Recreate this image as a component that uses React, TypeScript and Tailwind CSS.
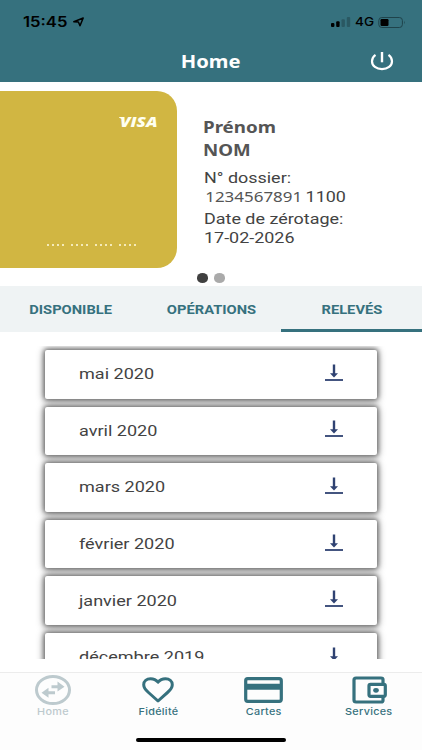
import type { ReactNode } from "react";

const months = [
  "mai 2020",
  "avril 2020",
  "mars 2020",
  "février 2020",
  "janvier 2020",
  "décembre 2019",
];

function StatusBar() {
  return (
    <div className="flex h-[42px] items-center pt-[2px] pl-[23px] pr-4 text-black">
      <span className="w-[50px] origin-left scale-x-[1.19] whitespace-nowrap font-['Inter',sans-serif] text-[14px] font-semibold leading-none">
        15:45
      </span>
      <svg className="-mt-px h-[10px] w-[12px]" viewBox="0 0 12 10" fill="none" stroke="currentColor" strokeWidth="1.5" strokeLinejoin="round">
        <path d="M.8 4.7 10.200 1 7 8.800 5.400 5Z" />
      </svg>
      <svg className="ml-auto h-[10px] w-[20px]" viewBox="0 0 20 10" fill="currentColor">
        <rect x="0" y="6" width="3.4" height="4" rx="1" />
        <rect x="5.2" y="4.2" width="3.4" height="5.8" rx="1" />
        <rect x="10.5" y="2.2" width="3.4" height="7.8" rx="1" opacity="0.22" />
        <rect x="15.8" y="0" width="3.4" height="10" rx="1" opacity="0.22" />
      </svg>
      <span className="ml-[4px] w-[23px] origin-left scale-x-[1.13] font-['Inter',sans-serif] text-[12px] font-medium leading-none">
        4G
      </span>
      <svg className="h-[11px] w-[28px]" viewBox="0 0 28 11">
        <rect x="0.8" y="0.5" width="23.6" height="10" rx="3" fill="none" stroke="#1f434b" />
        <rect x="2.5" y="2" width="8" height="7" rx="1.2" fill="#000" />
        <path d="M26 3.8q1.4 1.7 0 3.4Z" fill="#1f434b" />
      </svg>
    </div>
  );
}

function Header() {
  return (
    <header className="h-[81.5px] bg-[#36717e]">
      <StatusBar />
      <div className="relative flex h-[37px] items-center justify-center text-white">
        <h1 className="scale-x-[1.12] font-['Noto_Sans',sans-serif] text-[18px] font-bold leading-none">Home</h1>
        <svg className="absolute left-[370px] top-[9px] h-[20px] w-[24px]" viewBox="0 0 24 20" fill="none" stroke="currentColor" strokeWidth="2.2">
          <path d="M12 1v10.300" strokeWidth="2.400" />
          <path d="M5.500 3.800C3.300 5.300 2 7.600 2 10.200c0 4.700 4.400 8 10 8s10-3.300 10-8c0-2.600-1.300-4.900-3.500-6.400" />
        </svg>
      </div>
    </header>
  );
}

function CardInfo() {
  return (
    <section className="flex h-[204.5px] flex-col bg-white">
      <div className="flex pt-[9.5px]">
        <div className="flex h-[177px] w-[177px] flex-col items-end justify-between rounded-r-[20px] bg-[#d1b642] pt-[25px] pr-5 pb-[22px] text-[#fffff0]">
          <div className="flex h-[12px] items-center">
            <svg className="mr-[-4px] h-[11px] w-[5px]" viewBox="0 0 5 11" fill="currentColor">
              <path d="M0 0h3.5l1.5 5Q3 1.5 0 .6Z" />
            </svg>
            <span className="w-[37px] origin-left scale-x-[1.18] font-['Open_Sans',sans-serif] text-[14.5px] font-extrabold italic leading-none">
              VISA
            </span>
          </div>
          <div className="mr-[21px] flex gap-[7px]">
            {[0, 1, 2, 3].map((group) => (
              <div key={group} className="flex gap-[3px]">
                {[0, 1, 2, 3].map((dot) => (
                  <i key={dot} className="h-[2px] w-[2px] rounded-full bg-[#fffbe0]" />
                ))}
              </div>
            ))}
          </div>
        </div>

        <div className="ml-[26px] pt-[25px] font-['Roboto',sans-serif] text-[15px] text-[#434343]">
          <div className="origin-left scale-x-[1.17] font-['Noto_Sans',sans-serif] text-[16px] font-bold leading-[22.5px] text-[#555]">
            <p>Prénom</p>
            <p>NOM</p>
          </div>
          <div className="mt-[7px] ml-[0.5px] w-[130px] origin-left scale-x-[1.195] leading-5">
            <p>N° dossier:</p>
            <p className="-mt-px flex">
              <span className="ml-[1px] w-[84px] font-['Noto_Sans',sans-serif] text-[14.2px] text-[#555]">1234567891</span>
              <span>1100</span>
            </p>
            <p className="mt-[2px]">Date de zérotage:</p>
            <p className="-mt-px">17-02-2026</p>
          </div>
        </div>
      </div>
      <div className="mt-[5px] flex justify-center gap-[5.5px]">
        <i className="h-[9.5px] w-[11.5px] rounded-[50%] bg-[#404040]" />
        <i className="h-[9.5px] w-[11.5px] rounded-[50%] bg-[#aaa]" />
      </div>
    </section>
  );
}

function Tab({ label, active }: { label: string; active?: boolean }) {
  return (
    <div className={`flex items-center justify-center border-b-[3px] pt-[3px] ${active ? "border-[#36717e]" : "border-transparent"}`}>
      <span className="scale-x-[1.13] font-['Roboto',sans-serif] text-[13px] font-bold leading-none text-[#36717e]">
        {label}
      </span>
    </div>
  );
}

function Statement({ month }: { month: string }) {
  return (
    <div className="flex h-[48.6px] shrink-0 items-center justify-between rounded-[2px] bg-white px-[34px] shadow-[0_0_5px_1px_#666,0_1px_10px_0_#888]">
      <span className="origin-left scale-x-[1.165] pt-[1px] font-['Roboto',sans-serif] text-[15.5px] leading-normal text-[#434343]">
        {month}
      </span>
      <svg className="mb-[3px] h-[18px] w-[18px] text-[#2f4272]" viewBox="0 0 18 18" fill="none" stroke="currentColor">
        <path d="M9 .5V11" strokeWidth="2.4" />
        <path d="M5 9.300h8L9 13.500Z" fill="currentColor" stroke="none" />
        <path d="M0 16h18" strokeWidth="1.800" />
      </svg>
    </div>
  );
}

function NavItem({ label, muted, children }: { label: string; muted?: boolean; children: ReactNode }) {
  return (
    <div className={`flex flex-1 flex-col items-center ${muted ? "text-[#bdcace]" : "text-[#36717e]"}`}>
      <div className="flex h-[33px] items-center justify-center pt-[1px]">{children}</div>
      <span className="scale-x-[1.14] font-['Inter',sans-serif] text-[9.5px] font-medium leading-[12px] tracking-[0.25px]">
        {label}
      </span>
    </div>
  );
}

export default function App() {
  return (
    <div className="flex h-[750px] w-[422px] flex-col overflow-hidden bg-white">
      <Header />
      <CardInfo />

      <nav className="grid h-[46px] grid-cols-3 bg-[#eff3f4]">
        <Tab label="DISPONIBLE" />
        <Tab label="OPÉRATIONS" />
        <Tab label="RELEVÉS" active />
      </nav>

      <main className="mt-[14px] flex h-[313px] flex-col gap-[8px] overflow-hidden px-[45px] pt-[4px]">
        {months.map((month) => (
          <Statement key={month} month={month} />
        ))}
      </main>

      <footer className="mt-[13px] flex flex-1 flex-col border-t border-[#ececec] bg-[#fdfdfd]">
        <div className="flex">
          <NavItem label="Home" muted>
            <svg className="h-[30px] w-[36px]" viewBox="0 0 36 30" fill="none" stroke="currentColor">
              <ellipse cx="18" cy="15" rx="16.5" ry="13.5" strokeWidth="3" />
              <path d="M16.500 11.700h7M12 17.800h8" strokeWidth="3" />
              <path d="M22.500 6.500 29.500 11.700 22.500 16.500ZM13.500 12.700 6.500 17.800 13.500 22.700Z" fill="currentColor" stroke="none" />
            </svg>
          </NavItem>
          <NavItem label="Fidélité">
            <svg className="h-[26px] w-[32px]" viewBox="0 0 32 26" fill="none" stroke="currentColor" strokeWidth="3" strokeLinejoin="round">
              <path d="M16 24 6.500 15.500C2.500 12 1.700 10 1.700 7.700 1.700 4 4.700 1.700 8.500 1.700c3 0 5.700 1.200 7.500 3.500 1.800-2.300 4.500-3.500 7.500-3.500 3.800 0 6.800 2.300 6.800 6 0 2.300-.8 4.300-4.800 7.800Z" />
            </svg>
          </NavItem>
          <NavItem label="Cartes">
            <svg className="h-[26px] w-[39px]" viewBox="0 0 39 26" fill="none" stroke="currentColor">
              <rect x="1.7" y="1.7" width="35.6" height="22.6" rx="2" strokeWidth="3.2" />
              <path d="M2 9.700h35" strokeWidth="6" />
            </svg>
          </NavItem>
          <NavItem label="Services">
            <svg className="h-[28px] w-[35px]" viewBox="0 0 35 28" fill="none" stroke="currentColor" strokeWidth="3.2" strokeLinejoin="round">
              <path d="M31 7V3.500Q31 2 29 2H4Q2 2 2 4v20q0 2 2 2h25q2 0 2-1.500V21" />
              <rect x="17" y="8.3" width="16.3" height="12" rx="1.5" />
              <ellipse cx="24" cy="14.3" rx="2.8" ry="2.4" fill="currentColor" stroke="none" />
            </svg>
          </NavItem>
        </div>
        <div className="mx-auto mt-[19.5px] h-[4.5px] w-[150px] rounded-full bg-black" />
      </footer>
    </div>
  );
}
